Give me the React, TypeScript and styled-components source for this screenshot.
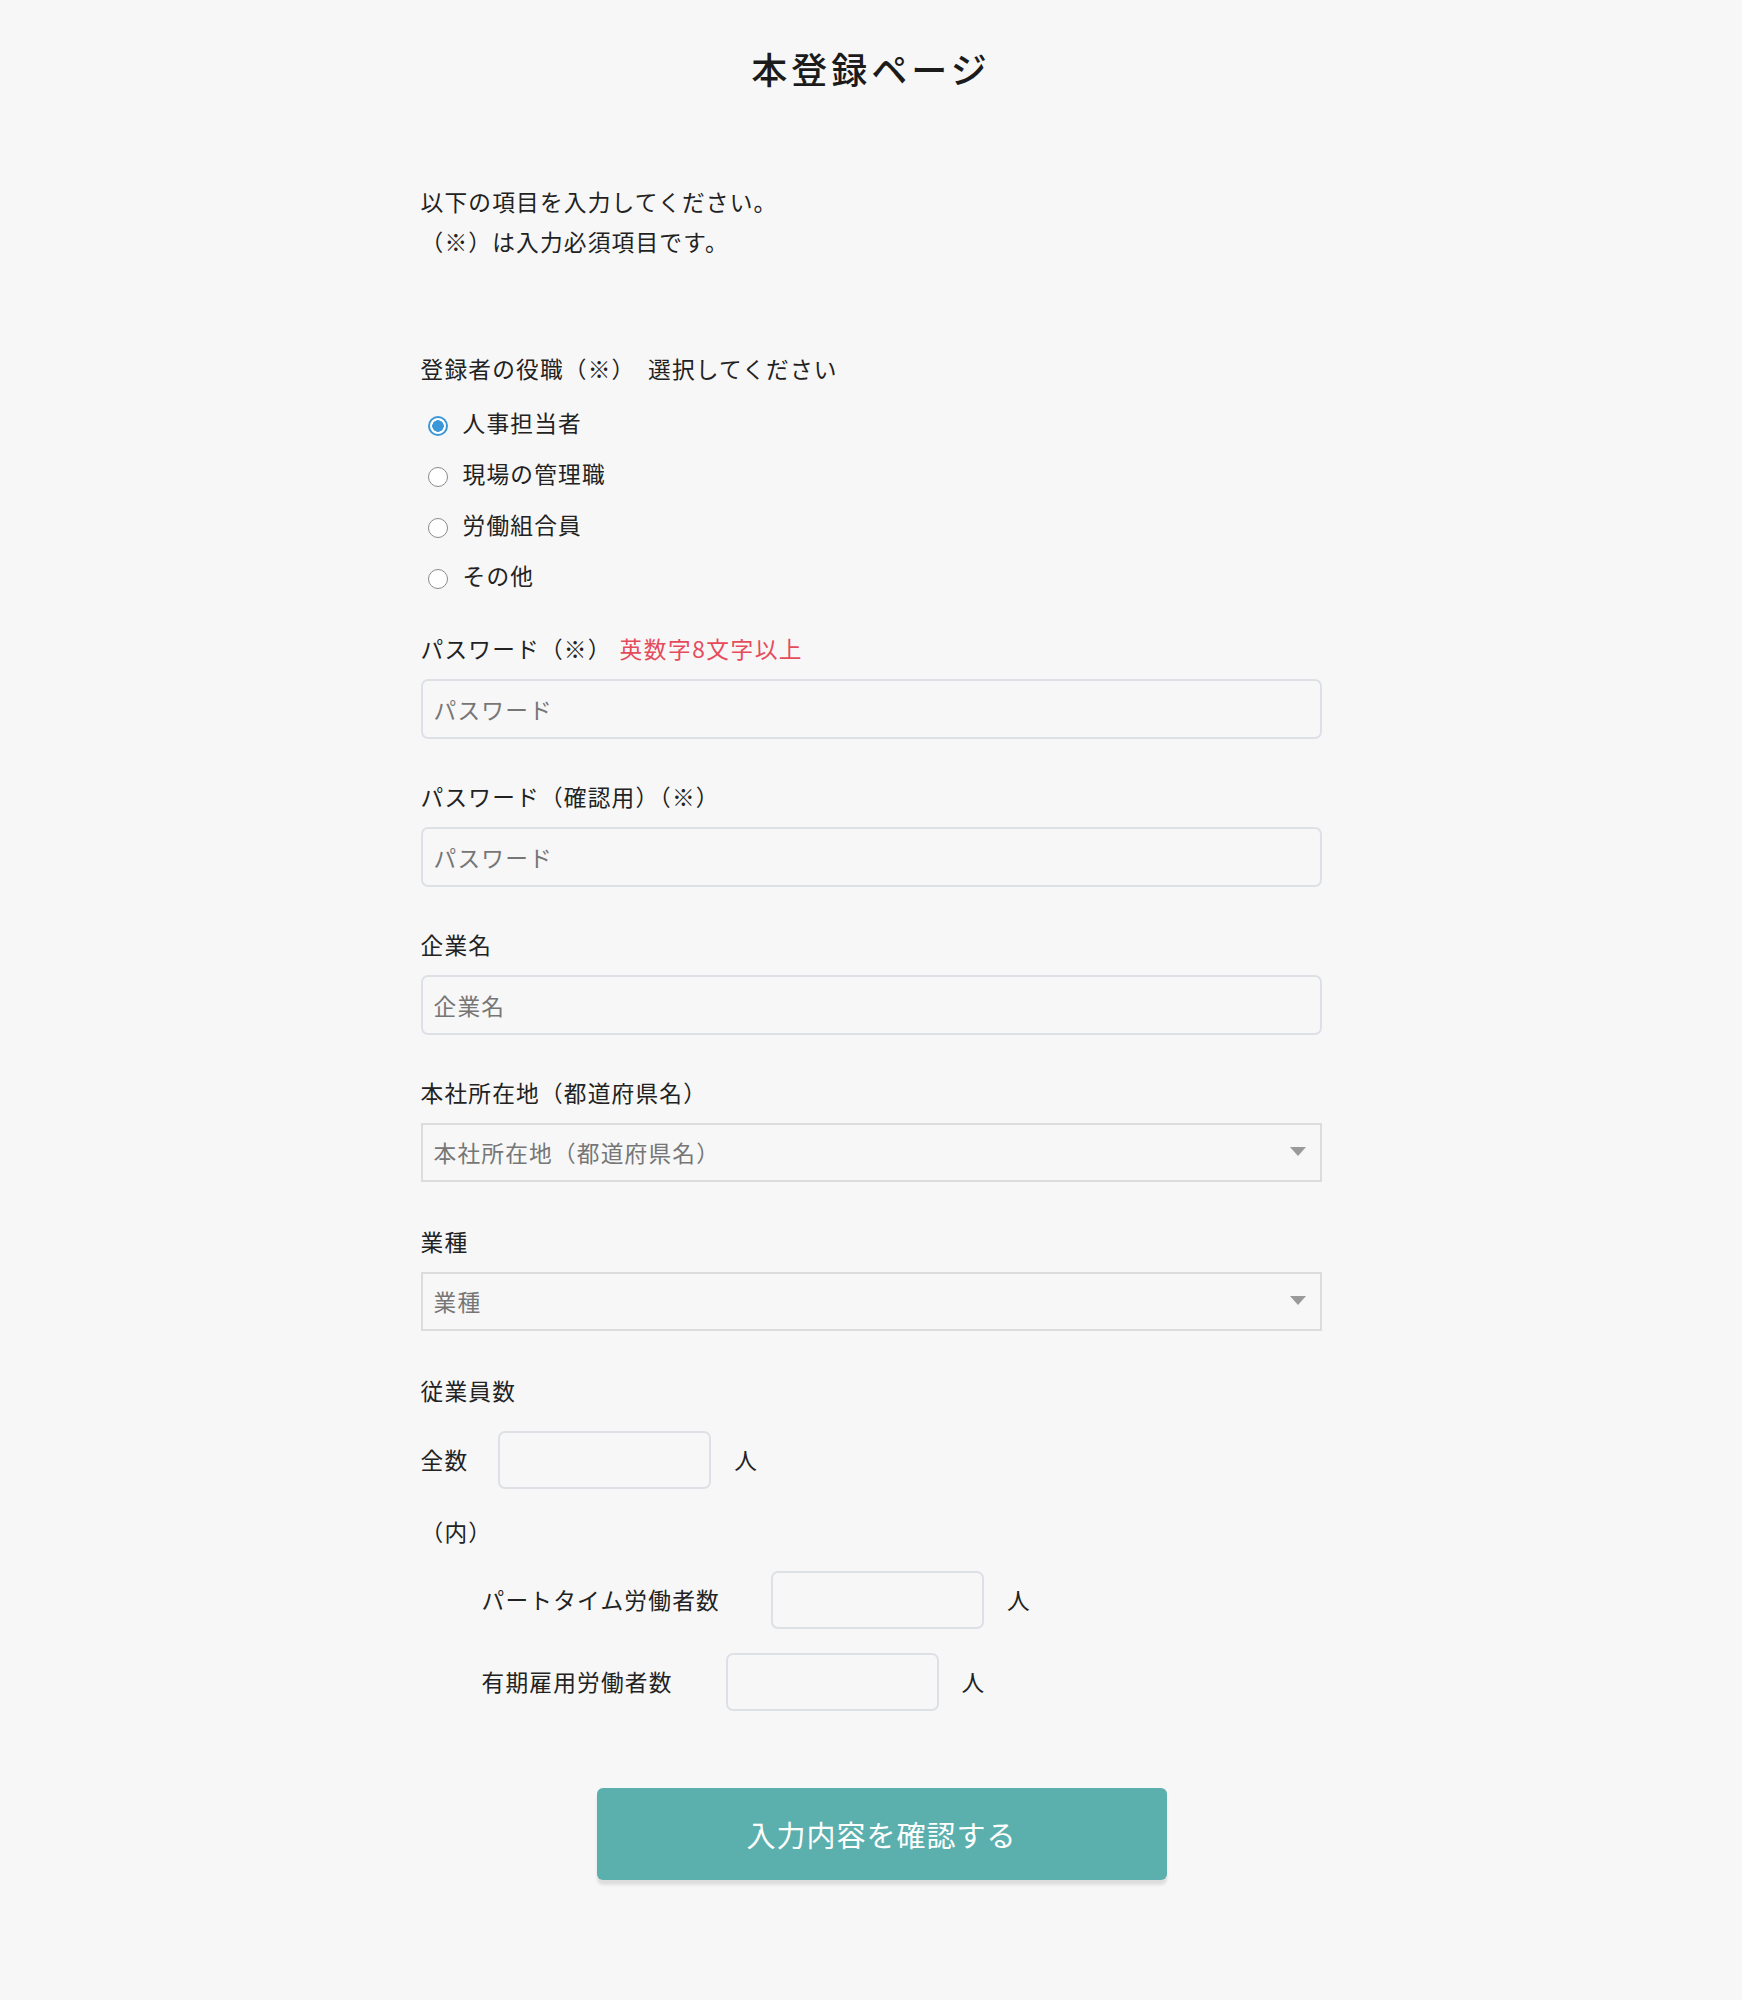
import React from "react";
import styled, { createGlobalStyle, css } from "styled-components";

const GlobalStyle = createGlobalStyle`
  html, body {
    margin: 0;
    padding: 0;
    background: #f7f7f7;
    color: #222;
    font-family: "Noto Sans CJK JP", "Noto Sans", sans-serif;
  }
  * { box-sizing: border-box; }
`;

const Page = styled.main`
  width: 901px;
  margin: 0 auto;
  padding: 43px 0 119px;
  font-size: 22.7px;
  letter-spacing: 1.2px;
`;

const Title = styled.h1`
  margin: 0;
  font-size: 36px;
  line-height: 50px;
  font-weight: 500;
  letter-spacing: 4px;
  text-align: center;
  color: #1b1b1b;
`;

const Intro = styled.p`
  margin: 89px 0 0;
  line-height: 40px;
`;

const GroupLabel = styled.div`
  margin-top: 90px;
  line-height: 34px;
`;

const RadioList = styled.div`
  margin-top: 11px;
  display: flex;
  flex-direction: column;
`;

const RadioRow = styled.label`
  display: flex;
  align-items: center;
  height: 51px;
  line-height: 34px;
  cursor: pointer;
`;

const Radio = styled.input.attrs({ type: "radio" })`
  appearance: none;
  -webkit-appearance: none;
  width: 20px;
  height: 20px;
  margin: 6px 15px 0 7px;
  border-radius: 50%;
  border: 1.5px solid #8a8a8a;
  background: #fff;
  flex: none;
  &:checked {
    border: 2px solid #3b97d8;
    background: radial-gradient(circle, #3b97d8 0 5.5px, #fff 6px);
  }
`;

const Fields = styled.div`
  margin-top: 31px;
`;

const Field = styled.div<{ $gap: number }>`
  margin-bottom: ${(p) => p.$gap}px;
`;

const Label = styled.div<{ $mb?: number }>`
  display: flex;
  align-items: center;
  gap: 8px;
  line-height: 34px;
  margin-bottom: ${(p) => p.$mb ?? 13}px;
`;

const Note = styled.span`
  color: #e64b5b;
  letter-spacing: 1.5px;
`;

const fieldBase = css`
  border: 2px solid #dde1e6;
  border-radius: 7px;
  background: transparent;
  font-family: inherit;
  font-size: 22.7px;
  letter-spacing: 1.2px;
  color: #222;
  outline: none;
  &::placeholder {
    color: #767676;
  }
`;

const TextInput = styled.input`
  ${fieldBase};
  display: block;
  width: 100%;
  height: 60px;
  padding: 0 11px;
`;

const SelectWrap = styled.div`
  position: relative;
  &::after {
    content: "";
    position: absolute;
    right: 16px;
    top: 50%;
    margin-top: -6px;
    border-left: 8.5px solid transparent;
    border-right: 8.5px solid transparent;
    border-top: 9px solid #9a9a9a;
    pointer-events: none;
  }
`;

const Select = styled.select`
  appearance: none;
  -webkit-appearance: none;
  display: block;
  width: 100%;
  height: 59px;
  padding: 0 40px 0 11px;
  border: 2px solid #dcdcdc;
  border-radius: 0;
  background: transparent;
  font-family: inherit;
  font-size: 22.7px;
  letter-spacing: 1.2px;
  color: #767676;
  outline: none;
`;

const CountRow = styled.div<{ $indent?: boolean; $mt?: number }>`
  display: flex;
  align-items: center;
  height: 58px;
  padding-left: ${(p) => (p.$indent ? 61 : 0)}px;
  margin-top: ${(p) => p.$mt ?? 0}px;
`;

const CountLabel = styled.span<{ $gap: number }>`
  margin-right: ${(p) => p.$gap}px;
  line-height: 34px;
`;

const CountInput = styled.input`
  ${fieldBase};
  width: 213px;
  height: 58px;
  padding: 0 11px;
`;

const Unit = styled.span`
  margin-left: 23px;
  line-height: 34px;
`;

const SubHeading = styled.div`
  margin: 26px 0 22px;
  line-height: 34px;
`;

const SubmitButton = styled.button`
  display: flex;
  align-items: center;
  justify-content: center;
  width: 570px;
  height: 92px;
  margin: 77px 0 0 176px;
  border: none;
  border-radius: 6px;
  background: #5bb0ae;
  color: #fff;
  font-family: inherit;
  font-size: 29px;
  letter-spacing: 1px;
  box-shadow: 0 5px 3px rgba(0, 0, 0, 0.1);
  cursor: pointer;
`;

const roles = ["人事担当者", "現場の管理職", "労働組合員", "その他"];

export default function App() {
  return (
    <>
      <GlobalStyle />
      <Page>
        <Title>本登録ページ</Title>
        <Intro>
          以下の項目を入力してください。
          <br />
          （※）は入力必須項目です。
        </Intro>

        <GroupLabel>登録者の役職（※）　選択してください</GroupLabel>
        <RadioList>
          {roles.map((r, i) => (
            <RadioRow key={r}>
              <Radio name="role" defaultChecked={i === 0} />
              {r}
            </RadioRow>
          ))}
        </RadioList>

        <Fields>
          <Field $gap={41}>
            <Label>
              パスワード（※）<Note>英数字8文字以上</Note>
            </Label>
            <TextInput type="password" placeholder="パスワード" />
          </Field>
          <Field $gap={41}>
            <Label>パスワード（確認用）（※）</Label>
            <TextInput type="password" placeholder="パスワード" />
          </Field>
          <Field $gap={41}>
            <Label>企業名</Label>
            <TextInput placeholder="企業名" />
          </Field>
          <Field $gap={43}>
            <Label>本社所在地（都道府県名）</Label>
            <SelectWrap>
              <Select defaultValue="">
                <option value="">本社所在地（都道府県名）</option>
              </Select>
            </SelectWrap>
          </Field>
          <Field $gap={43}>
            <Label>業種</Label>
            <SelectWrap>
              <Select defaultValue="">
                <option value="">業種</option>
              </Select>
            </SelectWrap>
          </Field>

          <Label $mb={23}>従業員数</Label>
          <CountRow>
            <CountLabel $gap={30}>全数</CountLabel>
            <CountInput />
            <Unit>人</Unit>
          </CountRow>
          <SubHeading>（内）</SubHeading>
          <CountRow $indent>
            <CountLabel $gap={51}>パートタイム労働者数</CountLabel>
            <CountInput />
            <Unit>人</Unit>
          </CountRow>
          <CountRow $indent $mt={24}>
            <CountLabel $gap={53}>有期雇用労働者数</CountLabel>
            <CountInput />
            <Unit>人</Unit>
          </CountRow>
        </Fields>

        <SubmitButton type="button">入力内容を確認する</SubmitButton>
      </Page>
    </>
  );
}
